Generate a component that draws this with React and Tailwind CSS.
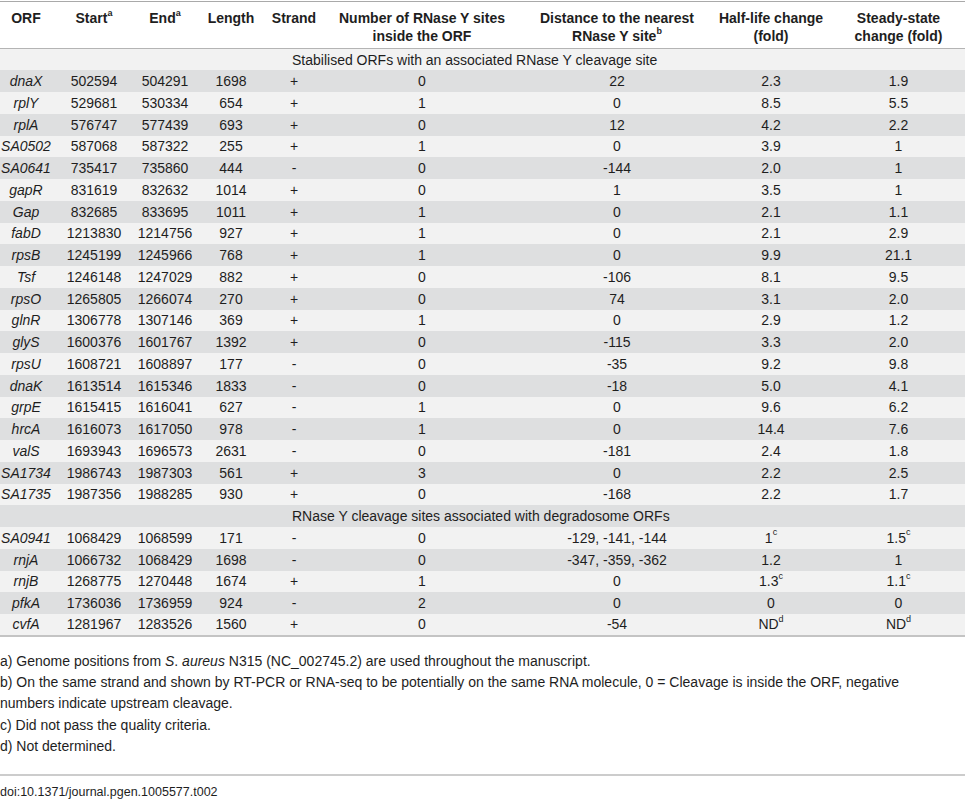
import React from 'react';

const stabilised = [
  ['dnaX', '502594', '504291', '1698', '+', '0', '22', '2.3', '1.9'],
  ['rplY', '529681', '530334', '654', '+', '1', '0', '8.5', '5.5'],
  ['rplA', '576747', '577439', '693', '+', '0', '12', '4.2', '2.2'],
  ['SA0502', '587068', '587322', '255', '+', '1', '0', '3.9', '1'],
  ['SA0641', '735417', '735860', '444', '-', '0', '-144', '2.0', '1'],
  ['gapR', '831619', '832632', '1014', '+', '0', '1', '3.5', '1'],
  ['Gap', '832685', '833695', '1011', '+', '1', '0', '2.1', '1.1'],
  ['fabD', '1213830', '1214756', '927', '+', '1', '0', '2.1', '2.9'],
  ['rpsB', '1245199', '1245966', '768', '+', '1', '0', '9.9', '21.1'],
  ['Tsf', '1246148', '1247029', '882', '+', '0', '-106', '8.1', '9.5'],
  ['rpsO', '1265805', '1266074', '270', '+', '0', '74', '3.1', '2.0'],
  ['glnR', '1306778', '1307146', '369', '+', '1', '0', '2.9', '1.2'],
  ['glyS', '1600376', '1601767', '1392', '+', '0', '-115', '3.3', '2.0'],
  ['rpsU', '1608721', '1608897', '177', '-', '0', '-35', '9.2', '9.8'],
  ['dnaK', '1613514', '1615346', '1833', '-', '0', '-18', '5.0', '4.1'],
  ['grpE', '1615415', '1616041', '627', '-', '1', '0', '9.6', '6.2'],
  ['hrcA', '1616073', '1617050', '978', '-', '1', '0', '14.4', '7.6'],
  ['valS', '1693943', '1696573', '2631', '-', '0', '-181', '2.4', '1.8'],
  ['SA1734', '1986743', '1987303', '561', '+', '3', '0', '2.2', '2.5'],
  ['SA1735', '1987356', '1988285', '930', '+', '0', '-168', '2.2', '1.7'],
];

const degradosome = [
  ['SA0941', '1068429', '1068599', '171', '-', '0', '-129, -141, -144', '1^c', '1.5^c'],
  ['rnjA', '1066732', '1068429', '1698', '-', '0', '-347, -359, -362', '1.2', '1'],
  ['rnjB', '1268775', '1270448', '1674', '+', '1', '0', '1.3^c', '1.1^c'],
  ['pfkA', '1736036', '1736959', '924', '-', '2', '0', '0', '0'],
  ['cvfA', '1281967', '1283526', '1560', '+', '0', '-54', 'ND^d', 'ND^d'],
];

const Sup = ({ children }) => (
  <sup className="text-[9px] leading-none align-[3px]">{children}</sup>
);

const withSup = (value) => {
  const [base, mark] = value.split('^');
  if (!mark) return value;
  return (
    <>
      {base}
      <Sup>{mark}</Sup>
    </>
  );
};

const Row = ({ cells, shaded }) => (
  <tr className={shaded ? 'bg-[#dedfe0] h-[21.75px]' : 'bg-[#f2f2f2] h-[21.75px]'}>
    {cells.map((c, i) => (
      <td key={i} className={i === 0 ? 'italic text-center p-0 whitespace-nowrap' : 'text-center p-0 whitespace-nowrap'}>
        {withSup(c)}
      </td>
    ))}
  </tr>
);

const SectionRow = ({ text, shaded }) => (
  <tr className={shaded ? 'bg-[#dedfe0] h-[21.75px]' : 'bg-[#f2f2f2] h-[21.75px]'}>
    <td colSpan={9} className="p-0 pl-[292px] text-left whitespace-nowrap">{text}</td>
  </tr>
);

export default function App() {
  return (
    <div className="w-[965px] min-h-[800px] bg-white text-[#1e1e1e] text-[14px] font-['Liberation_Sans',Arial,sans-serif] pt-[1px]">
      <table className="w-[965px] table-fixed border-collapse border-t border-t-[#a9a9a9] border-b-2 border-b-[#c4c4c4] leading-[18px]">
        <colgroup>
          <col className="w-[52px]" />
          <col className="w-[84px]" />
          <col className="w-[58px]" />
          <col className="w-[74px]" />
          <col className="w-[52px]" />
          <col className="w-[204px]" />
          <col className="w-[186px]" />
          <col className="w-[122px]" />
          <col className="w-[133px]" />
        </colgroup>
        <thead>
          <tr className="h-[47px] border-b border-b-[#b4b4b4] bg-white">
            <th className="align-top pt-[7px] font-bold text-center whitespace-nowrap">ORF</th>
            <th className="align-top pt-[7px] font-bold text-center whitespace-nowrap">Start<Sup>a</Sup></th>
            <th className="align-top pt-[7px] font-bold text-center whitespace-nowrap">End<Sup>a</Sup></th>
            <th className="align-top pt-[7px] font-bold text-center whitespace-nowrap">Length</th>
            <th className="align-top pt-[7px] font-bold text-center whitespace-nowrap">Strand</th>
            <th className="align-top pt-[7px] font-bold text-center whitespace-nowrap">Number of RNase Y sites<br />inside the ORF</th>
            <th className="align-top pt-[7px] font-bold text-center whitespace-nowrap">Distance to the nearest<br />RNase Y site<Sup>b</Sup></th>
            <th className="align-top pt-[7px] font-bold text-center whitespace-nowrap">Half-life change<br />(fold)</th>
            <th className="align-top pt-[7px] font-bold text-center whitespace-nowrap">Steady-state<br />change (fold)</th>
          </tr>
        </thead>
        <tbody>
          <SectionRow text="Stabilised ORFs with an associated RNase Y cleavage site" shaded={false} />
          {stabilised.map((r, i) => (
            <Row key={r[0]} cells={r} shaded={i % 2 === 0} />
          ))}
          <SectionRow text="RNase Y cleavage sites associated with degradosome ORFs" shaded={true} />
          {degradosome.map((r, i) => (
            <Row key={r[0]} cells={r} shaded={i % 2 === 1} />
          ))}
        </tbody>
      </table>

      <div className="pt-[14px] pb-[17px] leading-[21.3px] border-b-2 border-b-[#cccccc]">
        <p>a) Genome positions from <i>S</i>. <i>aureus</i> N315 (NC_002745.2) are used throughout the manuscript.</p>
        <p>b) On the same strand and shown by RT-PCR or RNA-seq to be potentially on the same RNA molecule, 0 = Cleavage is inside the ORF, negative<br />numbers indicate upstream cleavage.</p>
        <p>c) Did not pass the quality criteria.</p>
        <p>d) Not determined.</p>
      </div>
      <p className="pt-[8px] text-[12.5px] leading-[16px]">doi:10.1371/journal.pgen.1005577.t002</p>
    </div>
  );
}
